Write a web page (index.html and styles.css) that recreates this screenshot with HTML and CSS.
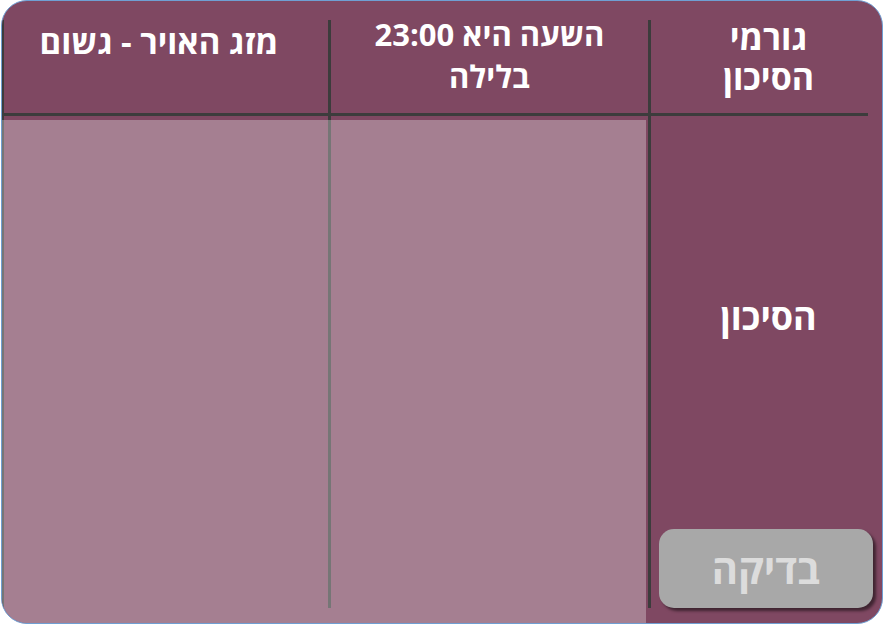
FILE: index.html
```html
<!DOCTYPE html>
<html lang="he" dir="rtl">
<head>
    <meta charset="UTF-8">
    <meta name="viewport" content="width=device-width, initial-scale=1.0">
    <title>גורמי הסיכון</title>
    <link rel="stylesheet" href="styles.css">
</head>
<body>
    <div class="board">
        <!-- header row -->
        <div class="head head-factors">גורמי<br>הסיכון</div>
        <div class="head head-time">השעה היא 23:00<br>בלילה</div>
        <div class="head head-weather">מזג האויר - גשום</div>

        <!-- grid lines -->
        <div class="vline vline-c"></div>
        <div class="vline vline-b"></div>
        <div class="vline vline-a"></div>
        <div class="hline"></div>

        <!-- body -->
        <div class="risk-col">
            <p class="risk-label">הסיכון</p>
            <button class="check-btn">בדיקה</button>
        </div>
        <div class="drop-zone"></div>
    </div>
</body>
</html>
```

FILE: styles.css
```css
/* General styling */
body {
    font-family: 'Open Sans', 'Liberation Sans', sans-serif;
    margin: 0;
    padding: 0;
    background: #fff;
}
.board {
    width: 882px;
    height: 624px;
    box-sizing: border-box;
    border: 1px solid #6f9fd3;
    border-radius: 26px;
    background: #7f4862;
    overflow: hidden;
    display: grid;
    grid-template-columns: 231px 3px 317px 3px 324px 2px;
    grid-template-rows: 112px 3px 1fr;
    color: #fff;
}
/* Header cells */
.head {
    grid-row: 1;
    text-align: center;
    font-weight: bold;
}
.head-factors {
    grid-column: 1;
    font-size: 34px;
    line-height: 40px;
    padding-top: 16px;
    padding-inline-end: 4px;
}
.head-time {
    grid-column: 3;
    font-size: 31px;
    line-height: 42px;
    padding-top: 12px;
}
.head-weather {
    grid-column: 5;
    font-size: 33px;
    line-height: 40px;
    padding-top: 21px;
    padding-inline-start: 14px;
}
/* Grid lines */
.vline {
    grid-row: 1 / 4;
    background: #3c3c3c;
    margin-top: 19px;
    margin-bottom: 15px;
}
.vline-c { grid-column: 2; }
.vline-b { grid-column: 4; }
.vline-a { grid-column: 6; }
.hline {
    grid-row: 2;
    grid-column: 1 / -1;
    background: #3c3c3c;
    margin-inline-start: 14px;
}
/* Body */
.drop-zone {
    grid-row: 3;
    grid-column: 3 / -1;
    margin-top: 4px;
    margin-inline-start: 2px;
    background: rgba(255, 255, 255, 0.3);
    z-index: 1;
}
.risk-col {
    grid-row: 3;
    grid-column: 1;
    display: flex;
    flex-direction: column;
    align-items: center;
}
.risk-label {
    margin: 181px 0 0;
    padding-inline-end: 4px;
    font-size: 36px;
    line-height: 40px;
    font-weight: bold;
}
.check-btn {
    margin: auto 9px 15px 8px;
    align-self: stretch;
    height: 79px;
    border: none;
    border-radius: 15px;
    background: #a8a8a8;
    box-shadow: 3px 3px 3px rgba(0, 0, 0, 0.5);
    color: #dcdcdc;
    font-family: 'Open Sans', 'Liberation Sans', sans-serif;
    font-size: 40px;
    font-weight: bold;
    padding: 0;
}
```
